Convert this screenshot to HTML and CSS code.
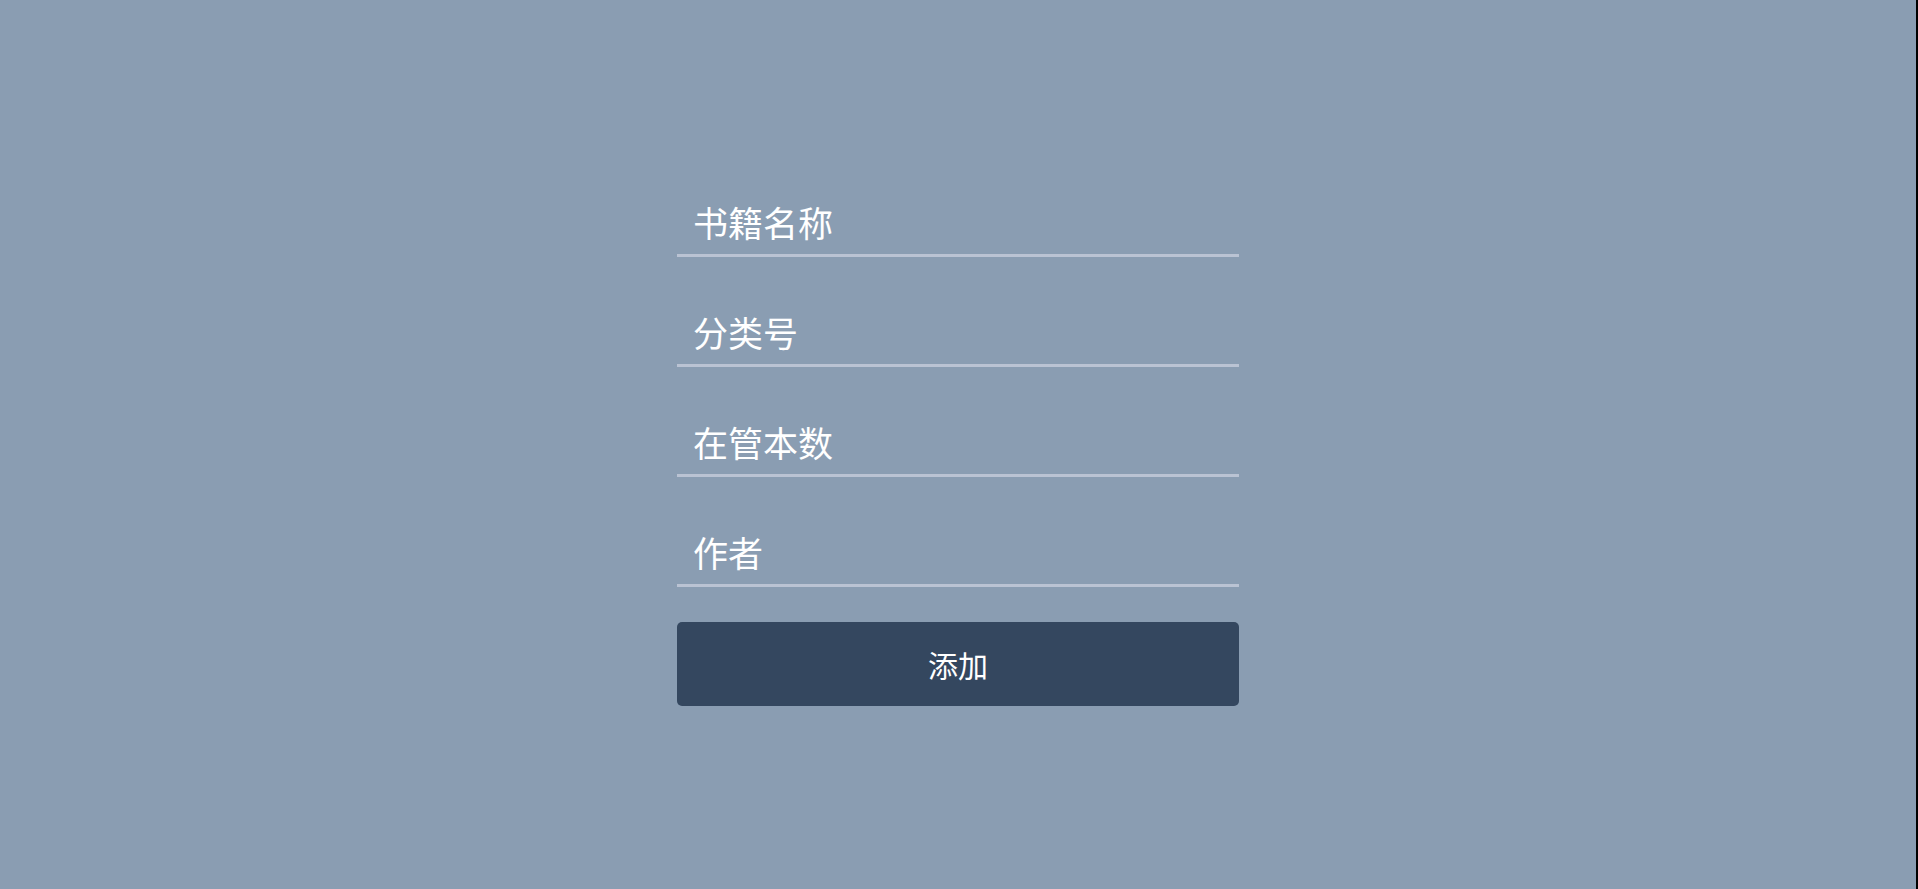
FILE: index.html
```html
<!DOCTYPE html>
<html lang="zh-CN">
<head>
  <meta charset="UTF-8" />
  <title>添加书籍</title>
  <link rel="stylesheet" href="styles.css">
</head>
<body>

  <div class="page">
    <form class="book-form" onsubmit="return false">
      <input class="field" type="text" placeholder="书籍名称">
      <input class="field" type="text" placeholder="分类号">
      <input class="field" type="text" placeholder="在管本数">
      <input class="field" type="text" placeholder="作者">
      <button class="btn" type="submit">添加</button>
    </form>
  </div>

</body>
</html>
```

FILE: styles.css
```css
html, body {
  margin: 0;
  padding: 0;
  height: 100%;
  background: #000;
}

body {
  font-family: "Noto Sans CJK SC", "Noto Sans", sans-serif;
}

.page {
  box-sizing: border-box;
  height: 100%;
  margin-right: 2px;
  background: #8a9db2;
  padding-top: 189px;
  display: flex;
  justify-content: center;
}

.book-form {
  width: 562px;
  display: flex;
  flex-direction: column;
}

.field {
  box-sizing: border-box;
  height: 68px;
  margin: 0 0 42px 0;
  padding: 0 16px;
  border: none;
  border-bottom: 3px solid #bac3d3;
  background: transparent;
  color: #fff;
  font-family: inherit;
  font-size: 35px;
  outline: none;
}

.field::placeholder {
  color: #fff;
  opacity: 1;
}

.field:last-of-type {
  margin-bottom: 35px;
}

.btn {
  height: 84px;
  border: none;
  border-radius: 5px;
  background: #34475f;
  color: #fff;
  font-family: inherit;
  font-size: 30px;
  cursor: pointer;
}

.btn:hover {
  background: #2b3c51;
}
```
